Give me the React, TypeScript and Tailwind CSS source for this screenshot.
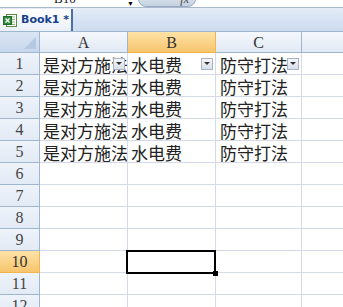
import React from 'react';

const cols = [
  { key: 'A', w: 'w-[88px]' },
  { key: 'B', w: 'w-[88px]' },
  { key: 'C', w: 'w-[86px]' },
];

const data: string[][] = [
  ['是对方施法', '水电费', '防守打法'],
  ['是对方施法', '水电费', '防守打法'],
  ['是对方施法', '水电费', '防守打法'],
  ['是对方施法', '水电费', '防守打法'],
  ['是对方施法', '水电费', '防守打法'],
];

const cjk = "font-['Noto_Sans_CJK_SC',sans-serif]";
const serif = "font-['Liberation_Serif',serif]";

function FilterButton() {
  return (
    <span className="absolute right-[2px] top-[5px] z-[5] flex h-[12px] w-[12px] items-center justify-center border border-[#a7b4c6] bg-gradient-to-b from-[#f4f6f9] to-[#d9dfe8]">
      <svg width="6" height="4" viewBox="0 0 6 4">
        <path d="M0 0h6L3 3z" fill="#333" />
      </svg>
    </span>
  );
}

function ExcelIcon() {
  return (
    <svg width="15" height="15" viewBox="0 0 15 15">
      <rect x="3.5" y="1.5" width="10" height="12" fill="#fff" stroke="#5b8a4a" />
      <path d="M6 4h6M6 6.5h6M6 9h6M6 11.5h6" stroke="#8fb77d" />
      <rect x="0.5" y="3.5" width="8" height="8" fill="#2f8a3c" stroke="#1e6b2a" />
      <path d="M2.5 5.5l4 4M6.5 5.5l-4 4" stroke="#fff" strokeWidth="1.3" />
    </svg>
  );
}

export default function App() {
  const rows = Array.from({ length: 12 }, (_, i) => i + 1);
  return (
    <div className="relative h-[307px] w-[343px] overflow-hidden bg-white">
      {/* name box / formula bar strip */}
      <div className="relative h-[8px] overflow-hidden border-b border-[#a9b8cc] bg-white">
        <span className={`absolute left-[54px] top-[-8px] text-[13px] leading-[14px] text-[#222] ${serif}`}>B10</span>
        <span className="absolute left-[127px] top-[0px] text-[7px] leading-[7px] text-black">▼</span>
        <div className="absolute left-[138px] top-[-10px] h-[17px] w-[58px] rounded-[8px] border border-[#9aabc2] bg-gradient-to-b from-[#e9eef5] to-[#c5d1e1]">
          <span className={`absolute right-[6px] top-[2px] text-[12px] italic leading-[12px] text-[#444] ${serif}`}>fx</span>
        </div>
      </div>

      {/* sheet tab bar */}
      <div className="flex h-[23px] items-end bg-gradient-to-b from-[#e3ecf8] to-[#cddcf0]">
        <div className="flex h-[22px] w-[73px] items-center gap-[3px] border-r-2 border-[#4a6fa5] bg-gradient-to-b from-white to-[#eaf0f8] pl-[3px] pt-[1px]">
          <ExcelIcon />
          <span className="font-['DejaVu_Sans',sans-serif] text-[11px] font-bold text-[#15428b]">Book1 *</span>
        </div>
      </div>

      {/* column headers */}
      <div className="flex h-[22px] border-t border-[#9eb6ce]">
        <div className="relative w-[40px] shrink-0 border-b border-r border-[#9eb6ce] bg-gradient-to-b from-[#dbe6f4] to-[#c7d7ec]">
          <svg className="absolute bottom-[3px] right-[3px]" width="12" height="12" viewBox="0 0 12 12">
            <path d="M12 0V12H0z" fill="#b6c8df" />
          </svg>
        </div>
        {cols.map((c) => (
          <div
            key={c.key}
            className={`${c.w} shrink-0 border-b border-r ${
              c.key === 'B'
                ? 'border-[#f2b44d] bg-gradient-to-b from-[#fde3a7] to-[#f7c46c]'
                : 'border-[#9eb6ce] bg-gradient-to-b from-[#f5f8fc] to-[#e1e9f4]'
            } flex items-center justify-center pt-[1px] text-[16px] leading-none text-[#333] ${serif}`}
          >
            {c.key}
          </div>
        ))}
        <div className="flex-1 border-b border-[#9eb6ce] bg-gradient-to-b from-[#f5f8fc] to-[#e1e9f4]" />
      </div>

      {/* grid rows */}
      {rows.map((r) => {
        const vals = data[r - 1];
        return (
          <div key={r} className="flex h-[22px]">
            <div
              className={`flex w-[40px] shrink-0 items-center justify-center border-b border-r pt-[1px] text-[16px] leading-none ${serif} ${
                r === 10
                  ? 'border-[#f2b44d] bg-gradient-to-b from-[#fde3a7] to-[#f7c46c] text-[#333]'
                  : 'border-[#9eb6ce] bg-gradient-to-b from-[#eef3fa] to-[#e2eaf5] text-[#444]'
              }`}
            >
              {r}
            </div>
            {cols.map((c, ci) => (
              <div
                key={c.key}
                className={`relative ${c.w} shrink-0 whitespace-nowrap border-b border-r border-[#d4dbe6] ${
                  ci === 0 ? 'overflow-hidden' : ''
                }`}
              >
                {vals && (
                  <span className={`absolute top-[2px] text-[17px] leading-[20px] text-[#222] ${cjk} ${ci === 2 ? 'left-[4px]' : 'left-[3px]'}`}>
                    {vals[ci]}
                  </span>
                )}
                {r === 1 && <FilterButton />}
                {r === 10 && c.key === 'B' && (
                  <div className="absolute left-[-2px] top-[-1px] z-10 h-[24px] w-[90px] border-2 border-black">
                    <div className="absolute bottom-[-4px] right-[-4px] h-[5px] w-[5px] bg-black" />
                  </div>
                )}
              </div>
            ))}
            <div className="flex-1 border-b border-[#d4dbe6]" />
          </div>
        );
      })}
    </div>
  );
}
